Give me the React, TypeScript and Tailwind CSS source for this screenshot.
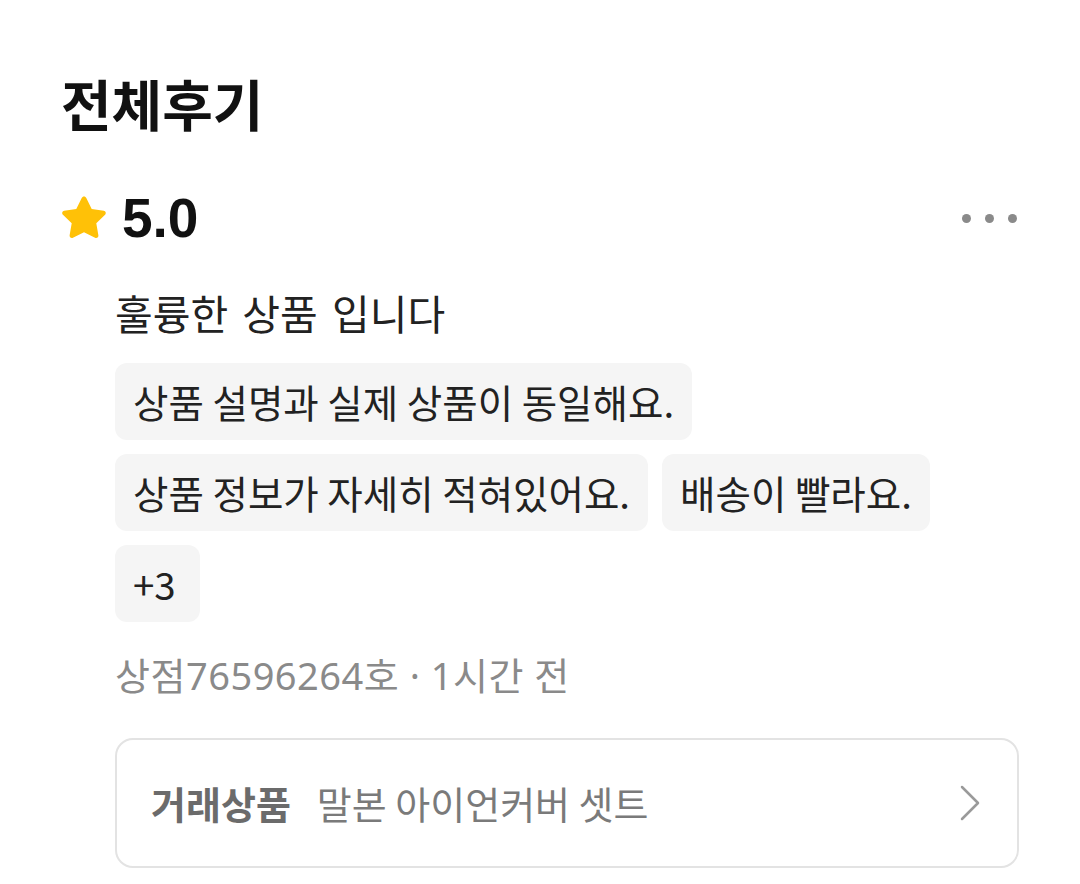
const FONT = { fontFamily: '"Noto Sans CJK KR", "Noto Sans", sans-serif' };

function Star() {
  return (
    <svg width="50" height="48" viewBox="0 0 24 23" className="-ml-[2px] shrink-0">
      <path
        d="M12 1.2c.5 0 .9.3 1.1.7l2.6 5.3 5.8.8c.9.1 1.3 1.3.6 1.9l-4.2 4.1 1 5.8c.2.9-.8 1.6-1.6 1.2L12 18.3l-5.3 2.7c-.8.4-1.8-.3-1.6-1.2l1-5.8-4.2-4.1c-.7-.6-.3-1.8.6-1.9l5.8-.8 2.6-5.3c.2-.4.6-.7 1.1-.7z"
        fill="#FFC107"
      />
    </svg>
  );
}

function Chip({ children }: { children: React.ReactNode }) {
  return (
    <span className="inline-flex h-[77px] min-w-[85px] items-center rounded-[12px] bg-[#f5f5f5] px-[18px] text-[38.5px] leading-none text-[#222]">
      {children}
    </span>
  );
}

export default function App() {
  const tags = ["상품 설명과 실제 상품이 동일해요.", "상품 정보가 자세히 적혀있어요.", "배송이 빨라요.", "+3"];

  return (
    <div className="h-[884px] w-[1080px] overflow-hidden bg-white" style={FONT}>
      <div className="px-[61px] pt-[68px]">
        <h1 className="text-[55px] font-bold leading-[68px] text-[#111]">전체후기</h1>

        <div className="mt-[58px] flex h-[48px] items-center justify-between">
          <div className="flex items-center gap-[13px]">
            <Star />
            <span
              className="text-[55px] font-bold leading-none text-[#111]"
              style={{ fontFamily: '"Liberation Sans", sans-serif' }}
            >
              5.0
            </span>
          </div>
          <div className="flex items-center gap-[14px] pr-[2px]">
            <span className="h-[9px] w-[9px] rounded-full bg-[#8a8a8a]" />
            <span className="h-[9px] w-[9px] rounded-full bg-[#8a8a8a]" />
            <span className="h-[9px] w-[9px] rounded-full bg-[#8a8a8a]" />
          </div>
        </div>

        <div className="pl-[54px]">
          <p className="mt-[46px] text-[41px] leading-[48px] text-[#222] [word-spacing:5px]">훌륭한 상품 입니다</p>

          <div className="mt-[27px] flex max-w-[880px] flex-wrap gap-[14px]">
            {tags.map((t) => (
              <Chip key={t}>{t}</Chip>
            ))}
          </div>

          <p
            className="mt-[29px] text-[38px] leading-[48px] tracking-[0.5px] text-[#8a8a8a]"
            style={{ fontFamily: '"Noto Sans", "Noto Sans CJK KR", sans-serif' }}
          >
            상점76596264호 · 1시간 전
          </p>

          <div className="mt-[39px] flex h-[130px] items-center justify-between rounded-[18px] border-2 border-[#e3e3e3] pl-[34px] pr-[36px]">
            <div className="flex items-center gap-[26px] text-[38px] leading-none">
              <span className="font-bold text-[#6b6b6b]">거래상품</span>
              <span className="text-[#7a7a7a]">말본 아이언커버 셋트</span>
            </div>
            <svg width="22" height="36" viewBox="0 0 22 36" fill="none">
              <path d="M3 2l16 16L3 34" stroke="#9a9a9a" strokeWidth="2.5" strokeLinecap="round" strokeLinejoin="round" />
            </svg>
          </div>
        </div>
      </div>
    </div>
  );
}
